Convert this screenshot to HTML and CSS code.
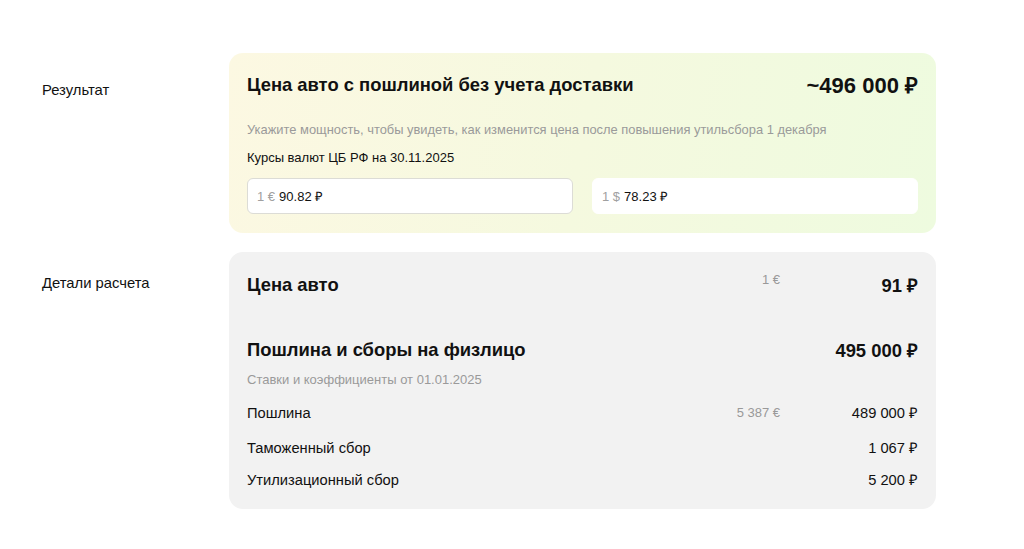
FILE: index.html
```html
<!DOCTYPE html>
<html lang="ru">
<head>
    <meta charset="UTF-8">
    <meta name="viewport" content="width=device-width, initial-scale=1.0">
    <title>Расчет пошлины</title>
    <link rel="stylesheet" href="styles.css">
</head>
<body>
    <div class="page">
        <section class="section">
            <div class="label">Результат</div>
            <div class="card result">
                <div class="result-head">
                    <h2 class="title">Цена авто с пошлиной без учета доставки</h2>
                    <div class="total">~496 000 ₽</div>
                </div>
                <p class="hint">Укажите мощность, чтобы увидеть, как изменится цена после повышения утильсбора 1 декабря</p>
                <p class="rates-title">Курсы валют ЦБ РФ на 30.11.2025</p>
                <div class="rates">
                    <div class="rate focused"><span class="rate-unit">1 €</span> 90.82 ₽</div>
                    <div class="rate"><span class="rate-unit">1 $</span> 78.23 ₽</div>
                </div>
            </div>
        </section>

        <section class="section">
            <div class="label label-details">Детали расчета</div>
            <div class="card details">
                <div class="row head">
                    <h3 class="title">Цена авто</h3>
                    <span class="foreign">1 €</span>
                    <span class="sum">91 ₽</span>
                </div>
                <div class="row head second">
                    <h3 class="title">Пошлина и сборы на физлицо</h3>
                    <span class="foreign"></span>
                    <span class="sum">495 000 ₽</span>
                </div>
                <p class="note">Ставки и коэффициенты от 01.01.2025</p>
                <div class="row item">
                    <span>Пошлина</span>
                    <span class="foreign">5 387 €</span>
                    <span class="sum">489 000 ₽</span>
                </div>
                <div class="row item">
                    <span>Таможенный сбор</span>
                    <span class="foreign"></span>
                    <span class="sum">1 067 ₽</span>
                </div>
                <div class="row item">
                    <span>Утилизационный сбор</span>
                    <span class="foreign"></span>
                    <span class="sum">5 200 ₽</span>
                </div>
            </div>
        </section>
    </div>
</body>
</html>
```

FILE: styles.css
```css
body {
    margin: 0;
    font-family: "Liberation Sans", Arial, sans-serif;
    color: #111;
    background: #fff;
}

.page {
    padding: 53px 0 0 42px;
    width: 894px;
    display: flex;
    flex-direction: column;
    gap: 19px;
}

.section {
    display: flex;
}

.label {
    width: 187px;
    flex-shrink: 0;
    font-size: 14.8px;
    line-height: 20px;
    padding-top: 27px;
}

.label-details {
    padding-top: 21px;
}

.card {
    flex: 1;
    border-radius: 14px;
    padding: 20px 18px 19px;
}

.result {
    padding-top: 18px;
    background: linear-gradient(100deg, #fcf8e2 0%, #f5f9df 50%, #eefbdf 100%);
}

.details {
    background: #f2f2f2;
}

.title {
    margin: 0;
    font-size: 18.4px;
    line-height: 24px;
    font-weight: bold;
}

.result-head {
    display: flex;
    justify-content: space-between;
    align-items: center;
}

.total {
    font-size: 22px;
    font-weight: bold;
    line-height: 26px;
    padding-top: 2px;
}

.hint {
    margin: 22px 0 0;
    font-size: 12.9px;
    line-height: 18px;
    color: #9a9a9a;
}

.rates-title {
    margin: 10px 0 0;
    font-size: 13px;
    line-height: 18px;
}

.rates {
    margin-top: 11px;
    display: grid;
    grid-template-columns: 1fr 1fr;
    gap: 19px;
}

.rate {
    height: 36px;
    box-sizing: border-box;
    background: #fff;
    border: 1px solid #fff;
    border-radius: 6px;
    padding: 0 9px;
    display: flex;
    align-items: center;
    gap: 4px;
    font-size: 13px;
}

.rate.focused {
    border-color: #dcdcd6;
}

.rate-unit {
    color: #a0a0a0;
}

.row {
    display: grid;
    grid-template-columns: 1fr 120px 138px;
    align-items: center;
}

.foreign {
    text-align: right;
    font-size: 13px;
    color: #999;
}

.sum {
    text-align: right;
}

.head .sum {
    font-size: 18.4px;
    font-weight: bold;
}

.head .foreign {
    align-self: start;
}

.head.second {
    margin-top: 40px;
}

.note {
    margin: 9px 0 0;
    font-size: 13px;
    line-height: 18px;
    color: #9a9a9a;
}

.item {
    font-size: 14.7px;
    line-height: 20px;
    margin-top: 14px;
}

.item + .item {
    margin-top: 15px;
}

.item + .item + .item {
    margin-top: 12px;
}
```
